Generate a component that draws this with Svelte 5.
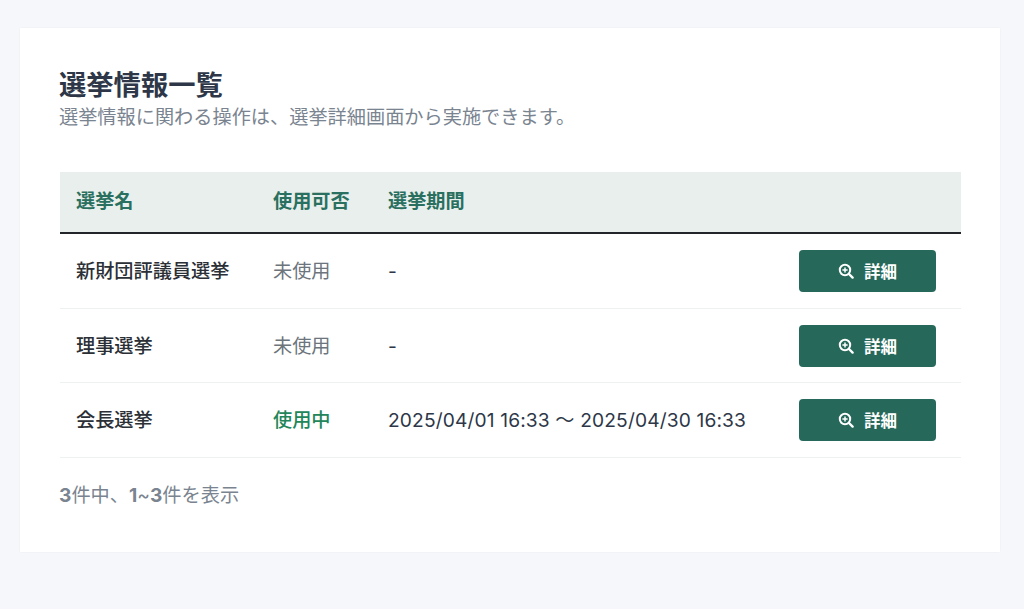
<script>
	const rows = [
		{ name: '新財団評議員選挙', status: '未使用', active: false, period: '-' },
		{ name: '理事選挙', status: '未使用', active: false, period: '-' },
		{ name: '会長選挙', status: '使用中', active: true, period: '2025/04/01 16:33 〜 2025/04/30 16:33' }
	];
</script>

<main class="page">
	<section class="card">
		<header class="head">
			<h1>選挙情報一覧</h1>
			<p>選挙情報に関わる操作は、選挙詳細画面から実施できます。</p>
		</header>

		<table>
			<thead>
				<tr>
					<th class="col-name">選挙名</th>
					<th class="col-status">使用可否</th>
					<th>選挙期間</th>
					<th class="col-action"></th>
				</tr>
			</thead>
			<tbody>
				{#each rows as row}
					<tr>
						<td class="name">{row.name}</td>
						<td class="status" class:active={row.active}>{row.status}</td>
						<td class="period">{row.period}</td>
						<td class="action">
							<button type="button">
								<svg viewBox="0 0 16 16" width="16" height="16" fill="none" stroke="currentColor" aria-hidden="true">
									<circle cx="7" cy="7" r="5.2" stroke-width="2" />
									<path d="M11 11l3.6 3.6" stroke-width="2.4" stroke-linecap="round" />
									<path d="M7 4.4v5.2M4.4 7h5.2" stroke-width="1.5" />
								</svg>
								<span>詳細</span>
							</button>
						</td>
					</tr>
				{/each}
			</tbody>
		</table>

		<p class="count"><b>3</b>件中、<b>1</b>~<b>3</b>件を表示</p>
	</section>
</main>

<style>
	:global(body) {
		background: #f5f7fa;
	}

	.page {
		padding: 28px 24px 58px 20px;
		font-family: 'Inter', 'Noto Sans CJK JP', sans-serif;
	}

	.card {
		background: #fff;
		padding: 40px 39px 44px 40px;
		box-shadow: 0 0 2px rgba(40, 50, 70, 0.05);
	}

	.head {
		margin-left: -1px;
	}

	.head h1 {
		margin: 0;
		font-size: 27.3px;
		line-height: 36px;
		font-weight: 700;
		color: #2d3748;
	}

	.head p {
		margin: 0;
		font-size: 19.2px;
		line-height: 26px;
		color: #7a8490;
	}

	table {
		width: 100%;
		margin-top: 42px;
		border-collapse: collapse;
		table-layout: fixed;
	}

	th {
		box-sizing: border-box;
		height: 61px;
		padding: 0 0 2px 15px;
		background: #e9efec;
		border-bottom: 2px solid #22262b;
		text-align: left;
		font-size: 19.2px;
		line-height: 24px;
		font-weight: 700;
		color: #2a7060;
	}

	th.col-name {
		width: 198px;
		padding-left: 16px;
	}

	.col-status {
		width: 115px;
	}

	.col-action {
		width: 162px;
	}

	td {
		box-sizing: border-box;
		height: 74.4px;
		padding: 0 0 0 15px;
		border-bottom: 1px solid #eef1f1;
		font-size: 19.2px;
		line-height: 24px;
		color: #2d3748;
		white-space: nowrap;
	}

	tbody tr:first-child td {
		height: 75.4px;
	}

	td.name {
		padding-left: 16px;
		font-weight: 500;
		color: #2b2f36;
	}

	.status {
		color: #6c747c;
	}

	.status.active {
		color: #23855a;
		font-weight: 500;
	}

	.period {
		letter-spacing: 0.13px;
	}

	td.action {
		padding: 0 25px 0 0;
		text-align: right;
	}

	button {
		display: inline-flex;
		align-items: center;
		justify-content: center;
		gap: 10px;
		width: 137px;
		height: 42px;
		border: none;
		border-radius: 4px;
		background: #26695a;
		color: #fff;
		font-family: inherit;
		font-size: 16.5px;
		font-weight: 700;
		vertical-align: middle;
	}

	.count {
		margin: 24px -1px 0;
		font-size: 19.2px;
		line-height: 26px;
		color: #7a8490;
	}
</style>
